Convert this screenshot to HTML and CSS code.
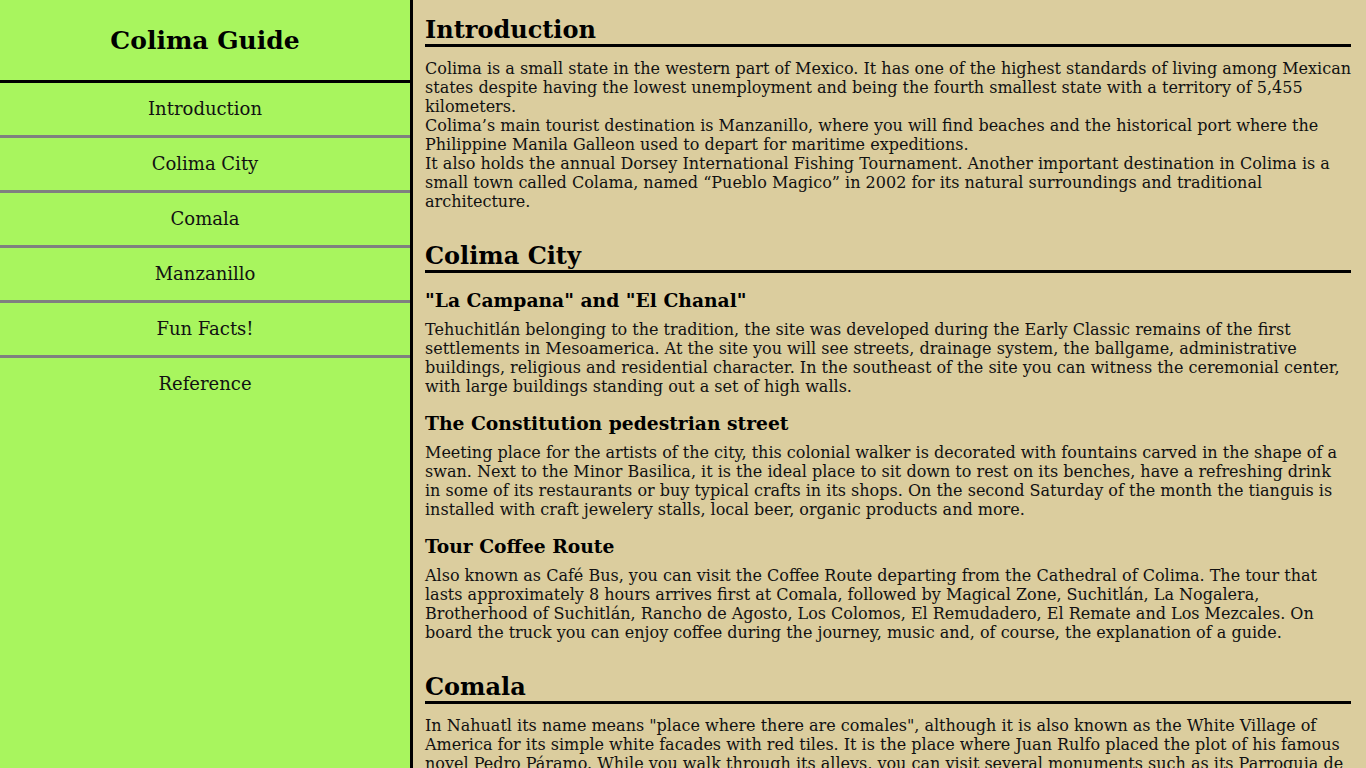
FILE: index.html
```html
<!DOCTYPE html>
<html lang="en">
<head>
<meta charset="utf-8">
<title>Colima Guide</title>
<link rel="stylesheet" href="styles.css">
</head>
<body>
<div class="page">
  <nav class="sidebar">
    <header class="sidebar-title">Colima Guide</header>
    <a class="nav-link" href="#introduction">Introduction</a>
    <a class="nav-link" href="#colima-city">Colima City</a>
    <a class="nav-link" href="#comala">Comala</a>
    <a class="nav-link" href="#manzanillo">Manzanillo</a>
    <a class="nav-link" href="#fun-facts">Fun Facts!</a>
    <a class="nav-link last" href="#reference">Reference</a>
  </nav>
  <main class="content">
    <section class="section" id="introduction">
      <h2 class="section-title">Introduction</h2>
      <p class="text">Colima is a small state in the western part of Mexico. It has one of the highest standards of living among Mexican states despite having the lowest unemployment and being the fourth smallest state with a territory of 5,455 kilometers.<br>Colima’s main tourist destination is Manzanillo, where you will find beaches and the historical port where the Philippine Manila Galleon used to depart for maritime expeditions.<br>It also holds the annual Dorsey International Fishing Tournament. Another important destination in Colima is a small town called Colama, named “Pueblo Magico” in 2002 for its natural surroundings and traditional architecture.</p>
    </section>
    <section class="section" id="colima-city">
      <h2 class="section-title">Colima City</h2>
      <h3 class="sub-title">"La Campana" and "El Chanal"</h3>
      <p class="text">Tehuchitlán belonging to the tradition, the site was developed during the Early Classic remains of the first settlements in Mesoamerica. At the site you will see streets, drainage system, the ballgame, administrative buildings, religious and residential character. In the southeast of the site you can witness the ceremonial center, with large buildings standing out a set of high walls.</p>
      <h3 class="sub-title">The Constitution pedestrian street</h3>
      <p class="text">Meeting place for the artists of the city, this colonial walker is decorated with fountains carved in the shape of a swan. Next to the Minor Basilica, it is the ideal place to sit down to rest on its benches, have a refreshing drink in some of its restaurants or buy typical crafts in its shops. On the second Saturday of the month the tianguis is installed with craft jewelery stalls, local beer, organic products and more.</p>
      <h3 class="sub-title">Tour Coffee Route</h3>
      <p class="text">Also known as Café Bus, you can visit the Coffee Route departing from the Cathedral of Colima. The tour that lasts approximately 8 hours arrives first at Comala, followed by Magical Zone, Suchitlán, La Nogalera, Brotherhood of Suchitlán, Rancho de Agosto, Los Colomos, El Remudadero, El Remate and Los Mezcales. On board the truck you can enjoy coffee during the journey, music and, of course, the explanation of a guide.</p>
    </section>
    <section class="section" id="comala">
      <h2 class="section-title">Comala</h2>
      <p class="text">In Nahuatl its name means "place where there are comales", although it is also known as the White Village of America for its simple white facades with red tiles. It is the place where Juan Rulfo placed the plot of his famous novel Pedro Páramo. While you walk through its alleys, you can visit several monuments such as its Parroquia de San Miguel del Espíritu Santo, the main garden and the portals where you can taste the traditional bread and the ponche.</p>
    </section>
    <section class="section" id="manzanillo">
      <h2 class="section-title">Manzanillo</h2>
      <p class="text">Known as the Sailfish Capital of the World, Manzanillo is one of the most important ports of the Mexican Pacific, with golden beaches, bays and lagoons ideal for water sports.</p>
    </section>
    <section class="section" id="fun-facts">
      <h2 class="section-title">Fun Facts!</h2>
      <p class="text">The Volcán de Colima is one of the most active volcanoes in Mexico and North America.</p>
    </section>
    <section class="section" id="reference">
      <h2 class="section-title">Reference</h2>
      <p class="text">Information taken from tourism guides of the state of Colima.</p>
    </section>
  </main>
</div>
</body>
</html>
```
FILE: styles.css
```css
html, body {
  margin: 0;
  padding: 0;
}
body {
  background: #dbcd9e;
  color: #111;
  font-family: "DejaVu Serif", "Liberation Serif", serif;
}
.page {
  display: flex;
  min-height: 100vh;
}
.sidebar {
  flex: 0 0 410px;
  width: 410px;
  background: #a8f55e;
  border-right: 3px solid #000;
  display: flex;
  flex-direction: column;
}
.sidebar-title {
  height: 80px;
  display: flex;
  align-items: center;
  justify-content: center;
  font-size: 25px;
  font-weight: bold;
  color: #000;
  border-bottom: 3px solid #000;
}
.nav-link {
  display: block;
  padding: 15px 0 16px;
  line-height: 21px;
  text-align: center;
  font-size: 18px;
  color: #111;
  text-decoration: none;
  border-bottom: 3px solid #808080;
}
.nav-link.last {
  border-bottom: none;
}
.content {
  flex: 1;
  min-width: 0;
  padding: 15px 15px 40px 12px;
}
.section + .section {
  margin-top: 30px;
}
.section-title {
  margin: 0 0 12px;
  font-size: 24px;
  font-weight: bold;
  color: #000;
  border-bottom: 3px solid #000;
}
.sub-title {
  margin: 16px 0 9px;
  font-size: 18.72px;
  font-weight: bold;
  color: #000;
}
.section-title + .sub-title {
  margin-top: 16px;
}
.text {
  margin: 0;
  font-size: 16px;
}
```
